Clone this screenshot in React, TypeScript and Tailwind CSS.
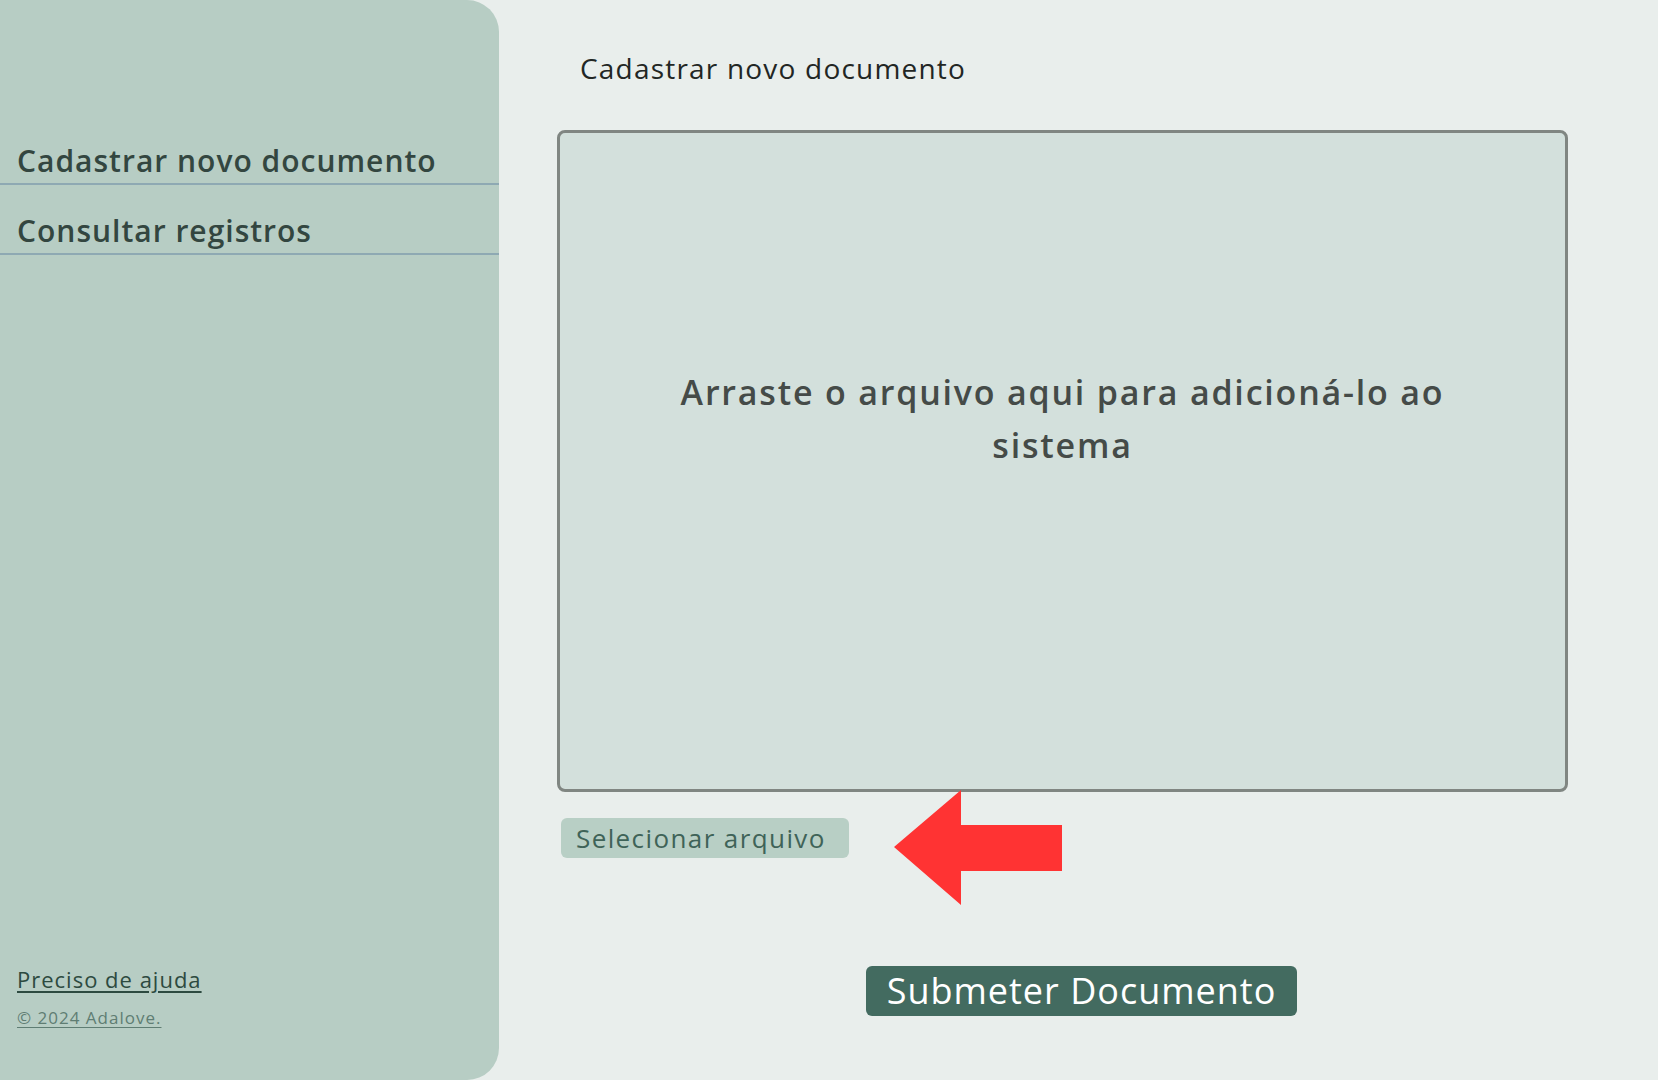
import React from "react";

const font = { fontFamily: "'Open Sans', 'Noto Sans', sans-serif" };

export default function App() {
  return (
    <div className="flex h-[1080px] w-[1658px] bg-[#e9eeec] overflow-hidden" style={font}>
      <aside className="flex h-full w-[499px] shrink-0 flex-col justify-between rounded-r-[32px] bg-[#b7cdc4]">
        <nav className="mt-[115px] flex flex-col">
          <a className="block border-b-2 border-[#8ea9b3] px-[17px] pb-[4px] pt-[28px] text-[30px] font-semibold leading-[36px] tracking-[1px] text-[#334640]">
            Cadastrar novo documento
          </a>
          <a className="block border-b-2 border-[#8ea9b3] px-[17px] pb-[4px] pt-[28px] text-[30px] font-semibold leading-[36px] tracking-[1px] text-[#334640]">
            Consultar registros
          </a>
        </nav>
        <div className="mb-[50px] flex flex-col gap-[12px] px-[17px]">
          <a className="text-[22px] leading-[30px] tracking-[1px] text-[#2d4a40] underline underline-offset-[3px]">Preciso de ajuda</a>
          <span className="text-[17px] leading-[24px] tracking-[1px] text-[#5f7d73] underline underline-offset-[3px]">© 2024 Adalove.</span>
        </div>
      </aside>
      <main className="relative flex flex-1 flex-col pl-[58px] pr-[90px]">
        <h1 className="mt-[50px] pl-[23px] text-[28px] font-normal leading-[36px] tracking-[1.2px] text-[#222624]">
          Cadastrar novo documento
        </h1>
        <div className="mt-[44px] flex h-[662px] w-[1011px] items-center justify-center rounded-[8px] border-[3px] border-[#808682] bg-[#d3e0dc]">
          <p className="mb-[84px] w-[880px] text-center text-[34px] font-semibold leading-[53px] tracking-[1.8px] text-[#454b48]">
            Arraste o arquivo aqui para adicioná-lo ao sistema
          </p>
        </div>
        <div className="mt-[26px] pl-[4px]">
          <button className="h-[40px] w-[288px] rounded-[6px] bg-[#b8cfc5] pl-[15px] text-left text-[26px] leading-[40px] tracking-[1.4px] text-[#3f6358]">
            Selecionar arquivo
          </button>
        </div>
        <div className="mt-[108px] pl-[309px]">
          <button className="h-[50px] w-[431px] rounded-[6px] bg-[#436b60] text-[36px] leading-[50px] tracking-[1px] text-white">
            Submeter Documento
          </button>
        </div>
        <svg className="absolute left-[395px] top-[790px]" width="168" height="115" viewBox="0 0 168 115">
          <polygon points="0,57 67,0 67,35 168,35 168,81 67,81 67,115" fill="#ff3333" />
        </svg>
      </main>
    </div>
  );
}
